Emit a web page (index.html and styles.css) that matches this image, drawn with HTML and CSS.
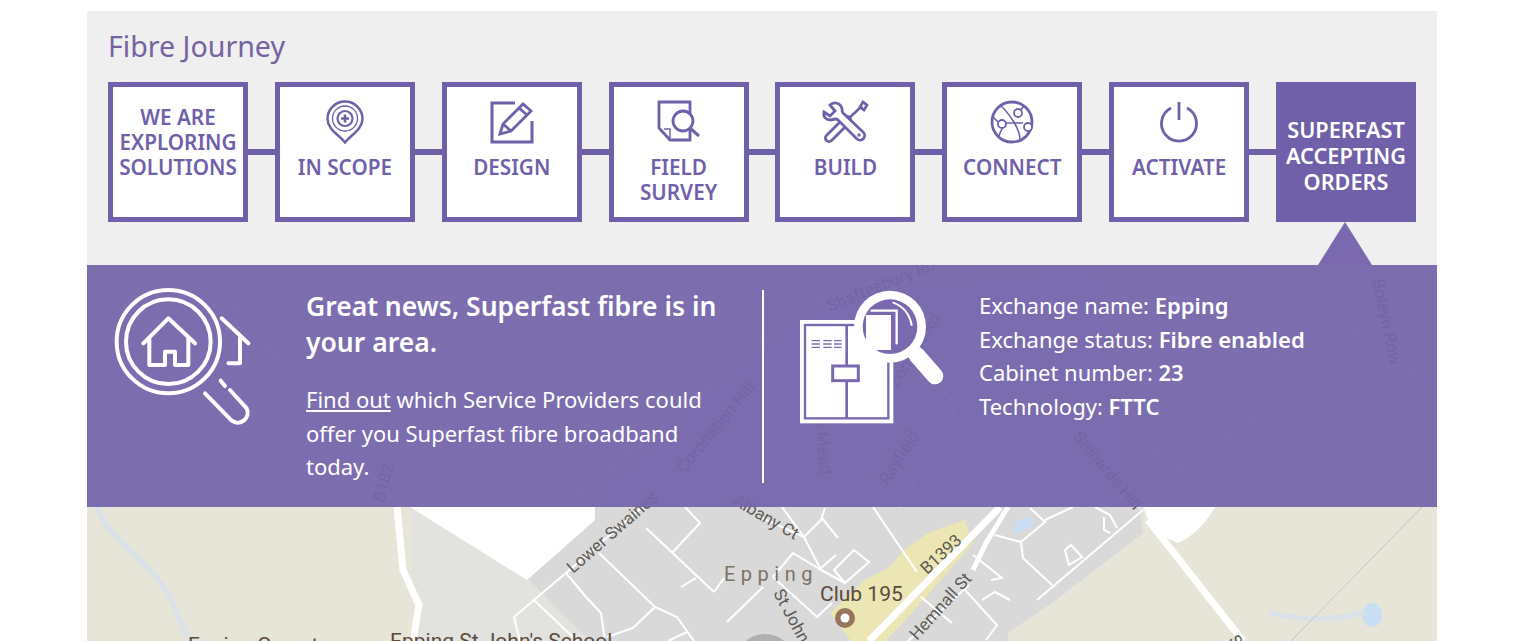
FILE: index.html
```html
<!DOCTYPE html>
<html lang="en">
<head>
    <meta charset="UTF-8">
    <meta name="viewport" content="width=device-width, initial-scale=1.0">
    <title>Fibre Journey</title>
    <link rel="stylesheet" href="styles.css">
</head>
<body>

    <div class="container">
        <div class="journey">
            <h1 class="journey-title">Fibre Journey</h1>
            <div class="steps">
                <div class="step"><span class="step-label">WE ARE EXPLORING SOLUTIONS</span></div>
                <div class="link"></div>
                <div class="step">
                    <svg class="step-icon" viewBox="0 0 44 44">
                        <path d="M22 42.500 C16 35 4.500 29 4.500 19 A17.500 17.500 0 0 1 39.500 19 C39.500 29 28 35 22 42.500Z" stroke-width="2.500"/>
                        <circle cx="22" cy="18.500" r="12.500" stroke-width="1.300"/>
                        <circle cx="22" cy="18.500" r="7.500" stroke-width="2.200"/>
                        <path d="M22 14.500 V22.500 M18 18.500 H26" stroke-width="2.500"/>
                    </svg>
                    <span class="step-label">IN SCOPE</span>
                </div>
                <div class="link"></div>
                <div class="step">
                    <svg class="step-icon" viewBox="0 0 44 44">
                        <path d="M25 3 H2 V42 H42 V21" stroke-width="3"/>
                        <path d="M10 34 L13 24 L33 4 L41 11 L21 31 Z M29 8 L37 15 M13 24 L21 31" stroke-width="2.800"/>
                    </svg>
                    <span class="step-label">DESIGN</span>
                </div>
                <div class="link"></div>
                <div class="step">
                    <svg class="step-icon" viewBox="0 0 44 44">
                        <path d="M2 2 H33 V40 H13 L2 28 Z" stroke-width="2.800"/>
                        <path d="M7 29 L13 29 L13 38" stroke-width="1.500"/>
                        <circle class="white-fill" cx="26" cy="21" r="10" stroke-width="2.800"/>
                        <path d="M34 29 L42 36" stroke-width="3"/>
                    </svg>
                    <span class="step-label">FIELD SURVEY</span>
                </div>
                <div class="link"></div>
                <div class="step">
                    <svg class="step-icon" viewBox="0 0 48 44">
                        <path d="M8 38 L26 20" stroke-width="10" stroke-linecap="round"/>
                        <path class="white-line" d="M8 38 L26 20" stroke-width="4.500" stroke-linecap="round"/>
                        <path d="M26 20 L41 6" stroke-width="2.500"/>
                        <path d="M39 7 L42 2 L46 5 L43 10 Z" stroke-width="2.800"/>
                        <path class="white-fill" d="M3 12 L9 16 L14 11 L9 5 C13 1 20 3 21 9 C21 11 21 12 22 13 L42 32 A4.500 4.500 0 0 1 36 39 L17 20 C15 18 13 19 10 20 C5 20 2 17 3 12 Z" stroke-width="2.800"/>
                        <circle cx="38" cy="35" r="1" stroke-width="1.500"/>
                    </svg>
                    <span class="step-label">BUILD</span>
                </div>
                <div class="link"></div>
                <div class="step">
                    <svg class="step-icon" viewBox="0 0 44 44">
                        <circle cx="22" cy="22" r="20" stroke-width="2.800"/>
                        <path d="M11 6 C16 10 20 16 24 22 C28 29 30 35 30 40 M34 6 L27 14 M16 24 C12 28 10 32 9 36 M16 23 H33 M3 17 L8 22" stroke-width="1.600"/>
                        <circle class="white-fill" cx="28" cy="13" r="4" stroke-width="1.800"/>
                        <circle class="white-fill" cx="12" cy="24" r="4" stroke-width="1.800"/>
                        <circle class="white-fill" cx="38" cy="27" r="4" stroke-width="1.800"/>
                    </svg>
                    <span class="step-label">CONNECT</span>
                </div>
                <div class="link"></div>
                <div class="step">
                    <svg class="step-icon" viewBox="0 0 44 44">
                        <path d="M14 8 A17.500 17.500 0 1 0 30 8" stroke-width="2.800"/>
                        <path d="M22 2 V20" stroke-width="2.800"/>
                    </svg>
                    <span class="step-label">ACTIVATE</span>
                </div>
                <div class="link"></div>
                <div class="step step-current"><span class="step-label">SUPERFAST ACCEPTING ORDERS</span></div>
            </div>
        </div>

        <div class="map-area">
            <svg class="map" viewBox="87 265 1350 376">
                <rect class="land" x="87" y="265" width="1350" height="376"/>
                <path class="park" d="M400 265 H1143 V533 L1056 600 L1008 633 V641 H415 Z"/>
                <path class="urban" d="M527 578 L595 520 V490 L820 300 L1100 265 L1143 533 L1056 600 L1008 633 V641 H590 Z"/>
                <path class="clear" d="M410 507 H595 V520 L527 580 Z"/>
                <path class="clear" d="M1143 507 H1215 C1205 525 1190 538 1178 543 L1154 533 Z"/>
                <path class="shops" d="M965 520 L973 543 L912 613 L886 641 H851 L830 613 L865 580 L890 567 L904 550 L928 533 Z"/>
                <path class="water" d="M1012 533 L1017 520 L1034 517 L1032 528 Z"/>
                <ellipse class="water" cx="1372" cy="615" rx="10" ry="12"/>
                <path class="stream" d="M1270 613 Q1320 625 1365 612"/>
                <path class="stream" d="M97 507 C110 545 165 570 175 610 L190 641"/>
                <path class="rail" d="M1422 507 L1291 641"/>

                <path class="road road-main" d="M397 507 L403 570 L419 605 L413 641"/>
                <path class="road road-main" d="M1148 520 L1243 641"/>
                <path class="road road-main" d="M1000 507 L869 641"/>
                <path class="road road-mid" d="M1008 507 L986 543 L973 570"/>
                <g class="road">
                    <path d="M662 490 L566 573 L534 600 L514 617 L520 641"/>
                    <path d="M534 600 L577 641"/>
                    <path d="M566 573 L586 597 L601 613 L605 641"/>
                    <path d="M599 553 L655 607 L677 617 L694 641"/>
                    <path d="M655 607 L633 628 L607 637"/>
                    <path d="M646 528 L714 592"/>
                    <path d="M672 553 L700 523 L685 507"/>
                    <path d="M681 587 L696 578 M714 592 L724 578 M727 622 L763 587 M687 632 L668 641"/>
                    <path d="M782 507 L804 537 L821 520 L825 508 M821 517 L838 538"/>
                    <path d="M760 517 L804 537 L821 570 L845 583 M873 507 L917 572 M821 568 L836 555"/>
                    <path d="M834 570 L854 550 L869 562 L845 583 Z"/>
                    <path d="M773 577 L817 617 L832 603 M773 577 L793 553 L821 570"/>
                    <path d="M1021 542 L1023 558 L1052 585"/>
                    <path d="M995 535 L1021 542 L1045 522 L1030 508 M1045 520 L1073 507"/>
                    <path d="M1095 507 L1110 515 L1117 528 M1104 517 V530 L1110 533"/>
                    <path d="M1143 510 L1037 600"/>
                    <path d="M1082 557 L1069 565 L1065 550 L1071 545 Z"/>
                    <path d="M973 555 L1002 578 L991 580 M982 600 L995 592 L1010 600"/>
                    <path d="M965 590 L997 625 L986 640 M921 597 L952 623 M969 585 L908 641"/>
                </g>
                <g class="road-faint">
                    <path d="M820 300 L1000 265 M700 400 L820 300 L980 420 L1140 507"/>
                    <path d="M560 507 L700 400 L760 290 M900 507 L960 400 L1100 320 L1280 265"/>
                    <path d="M1200 400 L1340 320 L1437 390 M1060 380 L1180 470 L1280 400"/>
                    <path d="M660 265 L590 400 L640 470 M200 265 L400 507"/>
                </g>

                <text class="label" transform="translate(573 574) rotate(-41)">Lower Swaines</text>
                <text class="label" transform="translate(732 504) rotate(30)">Albany Ct</text>
                <text class="label" transform="translate(927 575) rotate(-43)">B1393</text>
                <text class="label" transform="translate(917 641) rotate(-48)">Hemnall St</text>
                <text class="label" transform="translate(773 593) rotate(62)">St John</text>
                <text class="label" transform="translate(1228 640) rotate(55)">S</text>
                <text class="label label-town" x="724" y="581">Epping</text>
                <text class="label label-place" x="820" y="601">Club 195</text>
                <text class="label label-place" x="188" y="652">Epping Cemetery</text>
                <text class="label label-place" x="390" y="648">Epping St John's School</text>
                <circle class="marker" cx="845" cy="618" r="10"/>
                <circle class="clear" cx="845" cy="618" r="4.500"/>
                <circle class="marker" cx="361" cy="650" r="9"/>
                <circle class="blob" cx="765" cy="664" r="30"/>

                <text class="label" transform="translate(830 312) rotate(-22)">Shaftesbury Ro</text>
                <text class="label" transform="translate(1372 280) rotate(78)">Boleyn Row</text>
                <text class="label" transform="translate(684 474) rotate(-50)">Coronation Hill</text>
                <text class="label" transform="translate(888 486) rotate(-58)">Rayfield</text>
                <text class="label" transform="translate(1072 437) rotate(50)">Stonards Hill</text>
                <text class="label" transform="translate(816 415) rotate(86)">is Mead</text>
                <text class="label" transform="translate(898 388) rotate(-58)">consort Rd</text>
                <text class="label" transform="translate(384 503) rotate(-75)">B182</text>
            </svg>

            <div class="panel">
                <svg class="panel-icon-home" viewBox="0 0 510 450">
                    <circle cx="205" cy="185" r="155"/>
                    <circle cx="205" cy="185" r="127"/>
                    <path d="M130 190 L205 115 L285 190 M148 175 V255 H195 V215 H225 V255 H265 V175"/>
                    <path d="M365 115 L445 190 M420 175 V250 H385"/>
                    <path d="M362 302 L375 318 M315 340 L395 422 A30 30 0 0 0 440 385 L390 330"/>
                </svg>
                <div class="panel-text">
                    <h2 class="panel-heading">Great news, Superfast fibre is in your area.</h2>
                    <p class="panel-copy"><a class="panel-link" href="#">Find out</a> which Service Providers could offer you Superfast fibre broadband today.</p>
                </div>
                <div class="divider"></div>
                <svg class="panel-icon-cabinet" viewBox="0 0 540 450">
                    <rect class="fill-white" x="60" y="120" width="280" height="310"/>
                    <rect class="line-purple" x="75" y="135" width="250" height="280" stroke-width="7"/>
                    <path class="line-purple" d="M200 135 V415" stroke-width="8"/>
                    <path class="line-purple" d="M95 182 H120 M130 182 H155 M162 182 H185 M95 192 H120 M130 192 H155 M162 192 H185 M95 202 H120 M130 202 H155 M162 202 H185" stroke-width="4"/>
                    <rect class="fill-white line-purple" x="158" y="258" width="77" height="44" stroke-width="9"/>
                    <path class="line-white" d="M410 225 L465 288" stroke-width="50"/>
                    <circle class="fill-white" cx="330" cy="140" r="108"/>
                    <circle class="fill-purple" cx="330" cy="140" r="82"/>
                    <rect class="fill-white" x="258" y="105" width="75" height="105"/>
                    <path class="line-white" d="M275 92 H350 V190" stroke-width="7"/>
                    <path class="line-white" d="M340 68 Q385 85 395 135" stroke-width="6"/>
                </svg>
                <div class="exchange">
                    <div>Exchange name: <strong>Epping</strong></div>
                    <div>Exchange status: <strong>Fibre enabled</strong></div>
                    <div>Cabinet number: <strong>23</strong></div>
                    <div>Technology: <strong>FTTC</strong></div>
                </div>
            </div>
        </div>
    </div>

</body>
</html>
```

FILE: styles.css
```css
/* page */
html, body {
    height: 641px;
    overflow: hidden;
}

body {
    margin: 0;
    background-color: #ffffff;
    font-family: "Noto Sans", "Open Sans", Arial, sans-serif;
}

.container {
    width: 1350px;
    height: 630px;
    margin: 11px 0 0 87px;
    display: flex;
    flex-direction: column;
}

/* journey header */
.journey {
    position: relative;
    height: 254px;
    box-sizing: border-box;
    padding: 15px 21px 0;
    background-color: #efefef;
}

.journey-title {
    margin: 0 0 16px;
    height: 40px;
    font-size: 28.600px;
    line-height: 40px;
    font-weight: 400;
    color: #75629f;
}

.steps {
    display: flex;
    align-items: center;
}

.step {
    position: relative;
    flex: none;
    width: 140px;
    height: 140px;
    box-sizing: border-box;
    padding: 18px 4px 0;
    border: 5px solid #6f60a9;
    background-color: #ffffff;
    text-align: center;
}

.link {
    flex: 1;
    height: 6px;
    background-color: #6f60a9;
}

.step-label {
    display: block;
    font-size: 20.700px;
    line-height: 25px;
    font-weight: 600;
    color: #6f60a9;
}

.step-icon {
    display: block;
    height: 44px;
    margin: -5px auto 11px;
    fill: none;
    stroke: #6f60a9;
}

.step-icon .white-fill {
    fill: #ffffff;
}

.step-icon .white-line {
    stroke: #ffffff;
}

.step-current {
    padding-top: 30px;
    background-color: #6f60a9;
}

.step-current .step-label {
    font-size: 21.700px;
    line-height: 26px;
    color: #ffffff;
}

/* pointer from last step down to the panel */
.step-current::after {
    content: "";
    position: absolute;
    left: 37px;
    top: 135px;
    border-left: 27.500px solid transparent;
    border-right: 27.500px solid transparent;
    border-bottom: 43px solid #7a69ae;
}

/* map and overlay */
.map-area {
    position: relative;
    flex: 1;
}

.map {
    position: absolute;
    left: 0;
    top: 0;
    width: 1350px;
    height: 376px;
}

.land { fill: #e7e5d8; }
.park { fill: #e2e2df; }
.urban { fill: #d9d9d9; }
.clear { fill: #ffffff; }
.shops { fill: #ece5b4; }
.water { fill: #c9def3; }
.marker { fill: #96755e; }
.blob { fill: #b0b0b0; }

.stream {
    fill: none;
    stroke: #d8e2e8;
    stroke-width: 5;
}

.rail {
    fill: none;
    stroke: #c4c4b8;
    stroke-width: 1;
}

.road {
    fill: none;
    stroke: #ffffff;
    stroke-width: 2;
}

.road-main { stroke-width: 7; }
.road-mid { stroke-width: 5; }

.road-faint {
    fill: none;
    stroke: #ffffff;
    stroke-width: 3;
}

.label {
    font-family: Roboto, Arial, sans-serif;
    font-size: 17px;
    fill: #5d5a55;
}

.label-town {
    font-size: 20px;
    letter-spacing: 5.500px;
    fill: #7d7263;
}

.label-place {
    font-size: 21px;
    fill: #5b4a3c;
}

.panel {
    position: relative;
    height: 242px;
    box-sizing: border-box;
    padding: 25px 0 24px 27px;
    display: flex;
    align-items: flex-start;
    background-color: rgba(117, 101, 172, 0.94);
    color: #ffffff;
}

.panel-icon-home {
    flex: none;
    width: 170px;
    height: 150px;
    margin: -10px 0 0 -14px;
    fill: none;
    stroke: #ffffff;
    stroke-width: 12;
    stroke-linecap: round;
    stroke-linejoin: round;
}

.panel-text {
    flex: none;
    width: 430px;
    margin-left: 36px;
}

.panel-heading {
    margin: -2px 0 23px;
    font-size: 26.500px;
    line-height: 36px;
    font-weight: 600;
}

.panel-copy {
    margin: 0;
    font-size: 22px;
    line-height: 33.500px;
}

.panel-link {
    color: #ffffff;
}

.divider {
    flex: none;
    width: 2px;
    height: 193px;
    margin-left: 26px;
    background-color: #ffffff;
}

.panel-icon-cabinet {
    flex: none;
    width: 180px;
    height: 150px;
    margin: -10px 0 0 16px;
}

.fill-white { fill: #ffffff; }
.fill-purple { fill: #7a69ae; }
.line-purple { fill: none; stroke: #7a69ae; }
.line-white { fill: none; stroke: #ffffff; stroke-linecap: round; }
rect.fill-white.line-purple { fill: #ffffff; }

.exchange {
    margin: -1px 0 0 19px;
    font-size: 22px;
    line-height: 33.700px;
    white-space: nowrap;
}

.exchange strong {
    font-weight: 600;
}
```
